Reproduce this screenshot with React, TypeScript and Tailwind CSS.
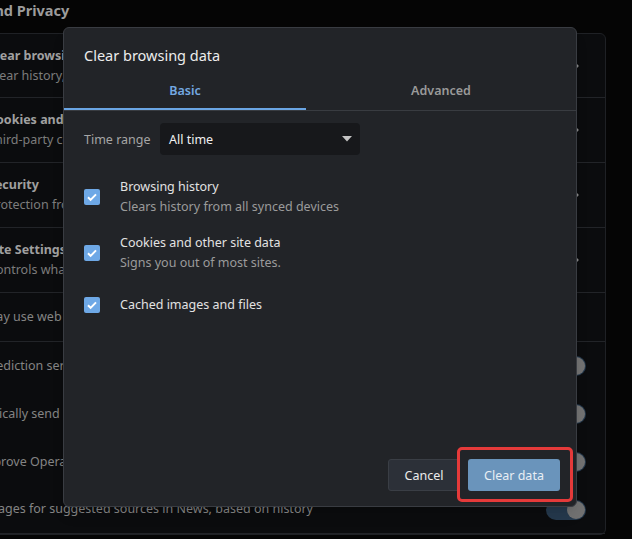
import { ChevronRight } from 'lucide-react';

const settingRows = [
  { title: 'Clear browsing data', sub: 'Clear history, cookies, cache, and more', h: 'h-[64px]' },
  { title: 'Cookies and other site data', sub: 'Third-party cookies are blocked in Private mode', h: 'h-[65px]' },
  { title: 'Security', sub: 'Protection from dangerous sites', h: 'h-[65px]' },
  { title: 'Site Settings', sub: 'Controls what information sites can use and show', h: 'h-[65px]' },
];

const toggleRows = [
  'Use a prediction service to help complete searches and URLs typed in the address bar',
  'Automatically send crash reports to Opera',
  'Help improve Opera by sending feature usage information',
  'Fetch images for suggested sources in News, based on history',
];

const items = [
  { title: 'Browsing history', sub: 'Clears history from all synced devices' },
  { title: 'Cookies and other site data', sub: 'Signs you out of most sites.' },
  { title: 'Cached images and files' },
];

function Toggle() {
  return (
    <div className="flex h-[20px] w-[40px] shrink-0 items-center justify-end rounded-full bg-[#25394d] pr-[1px]">
      <div className="h-[18px] w-[18px] rounded-full bg-[#727272]" />
    </div>
  );
}

function Checkbox() {
  return (
    <div className="flex h-[16px] w-[16px] shrink-0 items-center justify-center rounded-[2px] bg-[#6ea8e6]">
      <svg width="12" height="12" viewBox="0 0 12 12" fill="none">
        <path d="M2 6.3l2.6 2.6L10 3.4" stroke="#ffffff" strokeWidth="2" />
      </svg>
    </div>
  );
}

export default function App() {
  return (
    <div className="relative h-[539px] w-[632px] overflow-hidden bg-[#050505] font-['Noto_Sans',sans-serif]">
      {/* settings page behind the dialog, scrolled to the left */}
      <div className="ml-[-100px] w-[706px]">
        <h2 className="h-[33px] pl-[23px] text-[14.5px] font-bold leading-[20px] text-[#9c9c9c]">
          Security and Privacy
        </h2>
        <div className="rounded-md border border-[#1f2125] bg-[#0b0c0e]">
          {settingRows.map(row => (
            <div
              key={row.title}
              className={`flex items-center justify-between border-b border-[#222428] pl-[87px] pr-[21px] ${row.h}`}
            >
              <div className="leading-[20px]">
                <div className="text-[12.5px] font-bold text-[#a0a0a0]">{row.title}</div>
                <div className="text-[12.5px] text-[#7c7c7c]">{row.sub}</div>
              </div>
              <ChevronRight size={16} className="text-[#8a8a8a]" />
            </div>
          ))}
          <div className="flex h-[49px] items-center border-b border-[#222428] pl-[44px] text-[12.5px] text-[#848484]">
            Opera may use web services to improve your browsing experience.
          </div>
          {toggleRows.map((text, i) => (
            <div
              key={text}
              className={`flex h-[48px] items-center justify-between pl-[47px] pr-[19px] ${i === 3 ? 'border-b border-[#222428]' : ''}`}
            >
              <span className="text-[12.5px] text-[#848484]">{text}</span>
              <Toggle />
            </div>
          ))}
        </div>
      </div>

      {/* dialog */}
      <div className="absolute left-[63px] top-[27px] flex h-[480px] w-[514px] flex-col rounded-[6px] border border-[#393c42] bg-[#222428] shadow-lg">
        <div className="px-[20px] pt-[17px] text-[14.5px] leading-[20px] text-[#ececec]">Clear browsing data</div>
        <div className="mt-[5px] flex border-b border-[#393c41]">
          <div className="flex h-[40px] w-[242px] items-center justify-center border-b-2 border-[#6aa5e4] pt-[4px] text-[12.5px] font-semibold text-[#74a9e2]">
            Basic
          </div>
          <div className="flex h-[40px] flex-1 items-center justify-center border-b-2 border-transparent pt-[4px] text-[12.5px] font-semibold text-[#9a9a9a]">
            Advanced
          </div>
        </div>

        <div className="px-[20px]">
          <div className="mt-[12px] flex items-center">
            <span className="w-[76px] pt-[2px] text-[12.5px] text-[#a6a6a6]">Time range</span>
            <div className="flex h-[32px] w-[200px] items-center justify-between rounded-[4px] bg-[#17181b] pl-[9px] pr-[8px]">
              <span className="pt-[2px] text-[12.5px] text-[#f0f0f0]">All time</span>
              <svg width="10" height="6" viewBox="0 0 10 6">
                <path d="M0 0h10L5 5.5z" fill="#c4c4c4" />
              </svg>
            </div>
          </div>

          <div className="mt-[14px]">
            {items.map(item => (
              <div key={item.title} className={`flex items-center gap-5 ${item.sub ? 'py-[8px]' : 'h-[48px]'}`}>
                <Checkbox />
                <div className="leading-[20px]">
                  <div className="text-[12.5px] text-[#e2e2e2]">{item.title}</div>
                  {item.sub && <div className="text-[12.5px] text-[#9b9b9b]">{item.sub}</div>}
                </div>
              </div>
            ))}
          </div>
        </div>

        <div className="flex-1" />
        <div className="flex justify-end gap-2 pb-[15px] pr-[16px]">
          <button className="h-[32px] w-[72px] rounded-[3px] border border-[#3a3e45] bg-[#2c3038] pt-[2px] text-[12.5px] text-[#ececec]">
            Cancel
          </button>
          <button className="h-[32px] w-[92px] rounded-[3px] bg-[#6a94bb] pt-[2px] text-[12.5px] text-[#e8eef4]">
            Clear data
          </button>
        </div>
      </div>

      {/* highlight annotation */}
      <div className="absolute left-[457px] top-[447px] h-[55px] w-[116px] rounded-[5px] border-[3px] border-[#e53a3a]" />
    </div>
  );
}
